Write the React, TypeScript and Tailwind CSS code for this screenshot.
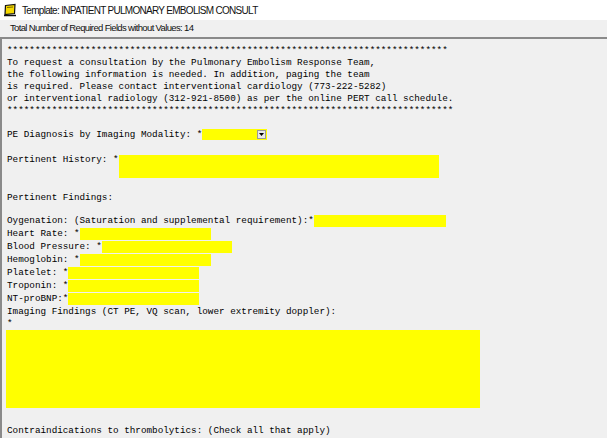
import React from 'react';

const mono = { fontFamily: '"Liberation Mono", "Courier New", monospace' };
const ui = { fontFamily: '"Liberation Sans", Arial, sans-serif' };

function Field({ w, h = 'h-[12px]' }: { w: string; h?: string }) {
  return <span className={`inline-block align-top bg-[#ffff00] ${w} ${h}`} />;
}

function Line({ children, h = 'h-[12px]' }: { children?: React.ReactNode; h?: string }) {
  return <div className={`flex items-start whitespace-pre ${h} leading-[12px]`}>{children}</div>;
}

export default function App() {
  return (
    <div className="w-[607px] h-[438px] overflow-hidden bg-[#f0f0f0] flex flex-col" style={ui}>
      {/* title bar */}
      <div className="h-[20px] bg-white flex items-center gap-[5px] pl-[3px] shrink-0">
        <svg width="14" height="14" viewBox="0 0 14 14">
          <path d="M2.5 2.5 L12 1.5 L11.5 10.5 L2 11.5 Z" fill="#f5d800" stroke="#111" strokeWidth="1.2" />
          <path d="M4 4.5 L10 4" stroke="#7a6a00" strokeWidth="1" />
          <path d="M1 12.5 L13 12.5" stroke="#111" strokeWidth="1.5" />
        </svg>
        <span className="text-[10px] tracking-[-0.7px] text-[#111]">Template: INPATIENT PULMONARY EMBOLISM CONSULT</span>
      </div>

      {/* count bar */}
      <div className="h-[17px] flex items-center pl-[10px] shrink-0">
        <span className="text-[9.5px] tracking-[-0.65px] text-[#111]">Total Number of Required Fields without Values: 14</span>
      </div>

      {/* editor */}
      <div className="flex-1 border-t-2 border-l-2 border-[#8a8a8a] pl-[5px] pt-[6px] text-[9.3px] text-black" style={mono}>
        <Line>{'*'.repeat(79)}</Line>
        <Line>To request a consultation by the Pulmonary Embolism Response Team,</Line>
        <Line>the following information is needed. In addition, paging the team</Line>
        <Line>is required. Please contact interventional cardiology (773-222-5282)</Line>
        <Line>or interventional radiology (312-921-8500) as per the online PERT call schedule.</Line>
        <Line>{'*'.repeat(80)}</Line>
        <Line />
        <Line>
          PE Diagnosis by Imaging Modality: *
          <span className="inline-flex justify-end items-center bg-[#ffff00] w-[65px] h-[11px]">
            <span className="w-[9px] h-[9px] mr-[1px] bg-[#e8e8e8] border border-[#9a9a9a] flex items-center justify-center">
              <svg width="5" height="3" viewBox="0 0 5 3"><path d="M0 0 L5 0 L2.5 3 Z" fill="#000" /></svg>
            </span>
          </span>
        </Line>
        <Line h="h-[13px]" />
        <Line h="h-[25px]">
          Pertinent History: *<Field w="w-[320px]" h="h-[23px] mt-[1px]" />
        </Line>
        <Line h="h-[13px]" />
        <Line>Pertinent Findings:</Line>
        <Line h="h-[11px]" />
        <Line h="h-[13px]">
          Oygenation: (Saturation and supplemental requirement):*<Field w="w-[132px]" />
        </Line>
        <Line h="h-[13px]">
          Heart Rate: *<Field w="w-[131px]" />
        </Line>
        <Line h="h-[13px]">
          Blood Pressure: *<Field w="w-[130px]" />
        </Line>
        <Line h="h-[13px]">
          Hemoglobin: *<Field w="w-[131px]" />
        </Line>
        <Line h="h-[13px]">
          Platelet: *<Field w="w-[131px]" />
        </Line>
        <Line h="h-[13px]">
          Troponin: *<Field w="w-[131px]" />
        </Line>
        <Line h="h-[13px]">
          NT-proBNP:*<Field w="w-[131px]" />
        </Line>
        <Line>Imaging Findings (CT PE, VQ scan, lower extremity doppler):</Line>
        <Line h="h-[12px]">*</Line>
        <div className="w-[474px] h-[78px] bg-[#ffff00] -ml-[1px]" />
        <div className="h-[17px]" />
        <Line>Contraindications to thrombolytics: (Check all that apply)</Line>
      </div>
    </div>
  );
}
